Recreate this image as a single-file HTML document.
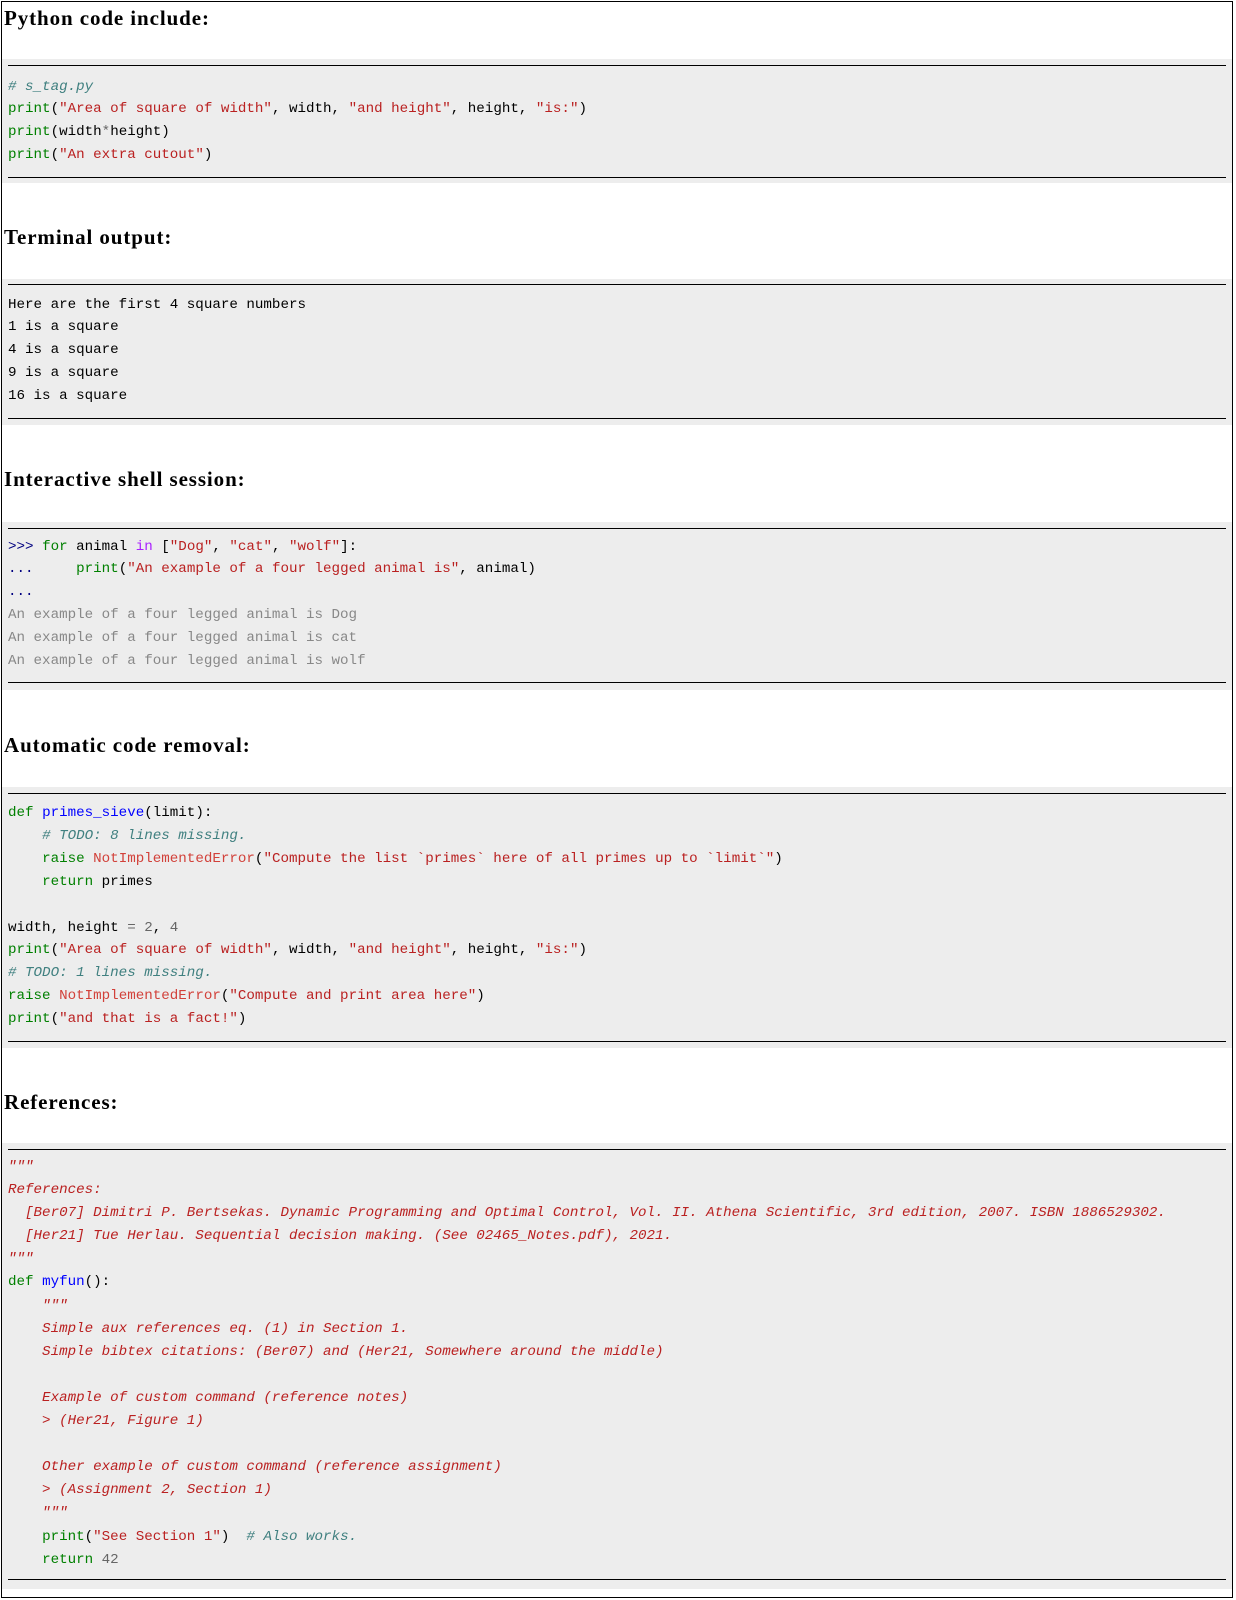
<!DOCTYPE html>
<html><head><meta charset="utf-8"><style>
html,body{margin:0;padding:0;width:1236px;height:1600px;background:#fff;overflow:hidden}
.frame{position:absolute;left:1px;top:1px;width:1232px;height:1597px;border:1px solid #000;box-sizing:border-box}
h2{position:absolute;left:4px;margin:0;font:bold 21px "Liberation Serif",serif;letter-spacing:0.9px;color:#000;line-height:24px}
.g{position:absolute;left:2px;width:1230px;background:#ededed}
.r{position:absolute;left:8px;width:1218px;height:1px;background:#000}
pre{position:absolute;left:8px;margin:0;font:14.2px "Liberation Mono",monospace;color:#000;white-space:pre}
.k{color:#008000}.s{color:#ba2121}.c{color:#408080;font-style:italic}.e{color:#d2413a}.n{color:#666}.f{color:#0000ff}.p{color:#aa22ff}.pr{color:#000080}.o{color:#888}.d{color:#ba2121;font-style:italic}
</style></head><body>
<div class="frame"></div>

<h2 style="top:6px">Python code include:</h2>
<div class="g" style="top:59px;height:124px"></div>
<div class="r" style="top:65px"></div>
<pre style="top:75.5px;line-height:22.7px"><span class="c"># s_tag.py</span>
<span class="k">print</span>(<span class="s">"Area of square of width"</span>, width, <span class="s">"and height"</span>, height, <span class="s">"is:"</span>)
<span class="k">print</span>(width<span class="n">*</span>height)
<span class="k">print</span>(<span class="s">"An extra cutout"</span>)</pre>
<div class="r" style="top:177px"></div>

<h2 style="top:225px">Terminal output:</h2>
<div class="g" style="top:279px;height:146px"></div>
<div class="r" style="top:284px"></div>
<pre style="top:293.5px;line-height:22.9px">Here are the first 4 square numbers
1 is a square
4 is a square
9 is a square
16 is a square</pre>
<div class="r" style="top:418px"></div>

<h2 style="top:467px">Interactive shell session:</h2>
<div class="g" style="top:522px;height:168px"></div>
<div class="r" style="top:528px"></div>
<pre style="top:535.5px;line-height:22.9px"><span class="pr">&gt;&gt;&gt;</span> <span class="k">for</span> animal <span class="p">in</span> [<span class="s">"Dog"</span>, <span class="s">"cat"</span>, <span class="s">"wolf"</span>]:
<span class="pr">...</span>     <span class="k">print</span>(<span class="s">"An example of a four legged animal is"</span>, animal)
<span class="pr">...</span>
<span class="o">An example of a four legged animal is Dog</span>
<span class="o">An example of a four legged animal is cat</span>
<span class="o">An example of a four legged animal is wolf</span></pre>
<div class="r" style="top:682px"></div>

<h2 style="top:733px">Automatic code removal:</h2>
<div class="g" style="top:787px;height:261px"></div>
<div class="r" style="top:793px"></div>
<pre style="top:802px;line-height:22.9px"><span class="k">def</span> <span class="f">primes_sieve</span>(limit):
    <span class="c"># TODO: 8 lines missing.</span>
    <span class="k">raise</span> <span class="e">NotImplementedError</span>(<span class="s">"Compute the list `primes` here of all primes up to `limit`"</span>)
    <span class="k">return</span> primes

width, height <span class="n">=</span> <span class="n">2</span>, <span class="n">4</span>
<span class="k">print</span>(<span class="s">"Area of square of width"</span>, width, <span class="s">"and height"</span>, height, <span class="s">"is:"</span>)
<span class="c"># TODO: 1 lines missing.</span>
<span class="k">raise</span> <span class="e">NotImplementedError</span>(<span class="s">"Compute and print area here"</span>)
<span class="k">print</span>(<span class="s">"and that is a fact!"</span>)</pre>
<div class="r" style="top:1041px"></div>

<h2 style="top:1090px">References:</h2>
<div class="g" style="top:1143px;height:446px"></div>
<div class="r" style="top:1149px"></div>
<pre style="top:1156px;line-height:23.1px"><span class="d">"""
References:
  [Ber07] Dimitri P. Bertsekas. Dynamic Programming and Optimal Control, Vol. II. Athena Scientific, 3rd edition, 2007. ISBN 1886529302.
  [Her21] Tue Herlau. Sequential decision making. (See 02465_Notes.pdf), 2021.
"""</span>
<span class="k">def</span> <span class="f">myfun</span>():
    <span class="d">"""
    Simple aux references eq. (1) in Section 1.
    Simple bibtex citations: (Ber07) and (Her21, Somewhere around the middle)

    Example of custom command (reference notes)
    &gt; (Her21, Figure 1)

    Other example of custom command (reference assignment)
    &gt; (Assignment 2, Section 1)
    """</span>
    <span class="k">print</span>(<span class="s">"See Section 1"</span>)  <span class="c"># Also works.</span>
    <span class="k">return</span> <span class="n">42</span></pre>
<div class="r" style="top:1579px"></div>
</body></html>
